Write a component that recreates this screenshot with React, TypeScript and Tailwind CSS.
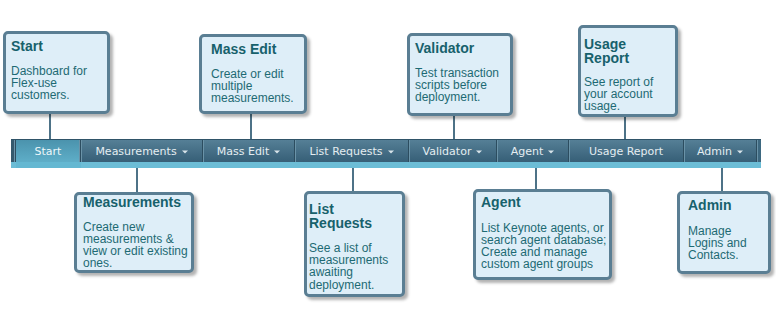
import React from "react";

type Item = { label: string; w: number; caret: boolean; active?: boolean };

const items: Item[] = [
  { label: "Start", w: 65, caret: false, active: true },
  { label: "Measurements", w: 122, caret: true },
  { label: "Mass Edit", w: 92, caret: true },
  { label: "List Requests", w: 114, caret: true },
  { label: "Validator", w: 88, caret: true },
  { label: "Agent", w: 72, caret: true },
  { label: "Usage Report", w: 115, caret: false },
  { label: "Admin", w: 73, caret: true },
];

type Callout = {
  x: number;
  y: number;
  w: number;
  h: number;
  pl: number;
  pt: number;
  title: string[];
  body: string[];
  gap: number;
};

const callouts: Callout[] = [
  { x: 3, y: 31, w: 107, h: 83, pl: 8, pt: 6, title: ["Start"], body: ["Dashboard for", "Flex-use", "customers."], gap: 11 },
  { x: 199, y: 34, w: 108, h: 80, pl: 12, pt: 6, title: ["Mass Edit"], body: ["Create or edit", "multiple", "measurements."], gap: 11 },
  { x: 407, y: 33, w: 106, h: 83, pl: 8, pt: 6, title: ["Validator"], body: ["Test transaction", "scripts before", "deployment."], gap: 11 },
  { x: 578, y: 25, w: 100, h: 92, pl: 6, pt: 10, title: ["Usage", "Report"], body: ["See report of", "your account", "usage."], gap: 11 },
  { x: 74, y: 192, w: 120, h: 81, pl: 9, pt: 1, title: ["Measurements"], body: ["Create new", "measurements &", "view or edit existing", "ones."], gap: 11 },
  { x: 304, y: 191, w: 101, h: 106, pl: 5, pt: 9, title: ["List", "Requests"], body: ["See a list of", "measurements", "awaiting", "deployment."], gap: 12 },
  { x: 473, y: 189, w: 139, h: 91, pl: 8, pt: 4, title: ["Agent"], body: ["List Keynote agents, or", "search agent database;", "Create and manage", "custom agent groups"], gap: 12 },
  { x: 677, y: 191, w: 94, h: 83, pl: 11, pt: 5, title: ["Admin"], body: ["Manage", "Logins and", "Contacts."], gap: 12 },
];

const lines = [
  { x: 50, y1: 114, y2: 139 },
  { x: 251, y1: 114, y2: 139 },
  { x: 454, y1: 116, y2: 139 },
  { x: 625, y1: 117, y2: 139 },
  { x: 137, y1: 168, y2: 192 },
  { x: 353, y1: 168, y2: 191 },
  { x: 536, y1: 168, y2: 189 },
  { x: 722, y1: 168, y2: 191 },
];

function Caret() {
  return (
    <svg width="6" height="4" viewBox="0 0 6 4" className="ml-[5px] mt-[1px]">
      <path d="M0 0.5 L6 0.5 L3 3.5 Z" fill="#d8e4ea" />
    </svg>
  );
}

export default function App() {
  return (
    <div className="relative w-[776px] h-[311px] bg-white overflow-hidden">
      {/* connectors */}
      {lines.map((l, i) => (
        <div
          key={i}
          className="absolute w-[2px] bg-[#4d7287]"
          style={{ left: l.x - 1, top: l.y1, height: l.y2 - l.y1 }}
        />
      ))}

      {/* nav bar */}
      <div className="pt-[139px] pl-[11px]">
        <div className="w-[750px] flex flex-col">
          <div className="flex h-[23px] bg-gradient-to-b from-[#557f96] to-[#365f77] border-t border-[#2f5368]">
            <div className="w-[5px] flex">
              <div className="w-[3px] bg-[#34596d]" />
              <div className="w-[1px] bg-[#6a93a8]" />
              <div className="w-[1px] bg-[#2c4d60]" />
            </div>
            {items.map((it) => (
              <div
                key={it.label}
                className={
                  it.active
                    ? "flex items-center justify-center bg-gradient-to-b from-[#4b93ad] to-[#5eaec8] border-r border-[#2c4d60] shadow-[inset_-1px_0_0_#6a93a8]"
                    : "flex items-center justify-center border-r border-[#2c4d60] shadow-[inset_1px_0_0_#6a93a8]"
                }
                style={{ width: it.w }}
              >
                <span
                  className={
                    "text-[11px] leading-none font-['DejaVu_Sans',Verdana,sans-serif] " +
                    (it.active ? "text-[#eef7fa]" : "text-[#e4edf1]")
                  }
                >
                  {it.label}
                </span>
                {it.caret && <Caret />}
              </div>
            ))}
            <div className="flex-1 bg-[#3d6880] shadow-[inset_1px_0_0_#6a93a8]" />
          </div>
          <div className="flex h-[6px] bg-[#6cbdd6]">
            <div className="ml-[5px] w-[65px] bg-[#64b8d2]" />
          </div>
        </div>
      </div>

      {/* callouts */}
      {callouts.map((c) => (
        <div
          key={c.title.join(" ")}
          className="absolute bg-[#deeef8] border-[3px] border-[#5a7e93] rounded-[5px] shadow-[3px_3px_3px_rgba(0,0,0,0.3)] font-['Liberation_Sans',Arial,sans-serif]"
          style={{ left: c.x, top: c.y, width: c.w, height: c.h, paddingLeft: c.pl - 3, paddingTop: c.pt }}
        >
          <div className="text-[14px] leading-[13.5px] font-bold text-[#17616c]">
            {c.title.map((t) => (
              <div key={t}>{t}</div>
            ))}
          </div>
          <div className="text-[12px] leading-[12.2px] text-[#1d6a73]" style={{ marginTop: c.gap }}>
            {c.body.map((t) => (
              <div key={t} className="whitespace-nowrap">
                {t}
              </div>
            ))}
          </div>
        </div>
      ))}
    </div>
  );
}
